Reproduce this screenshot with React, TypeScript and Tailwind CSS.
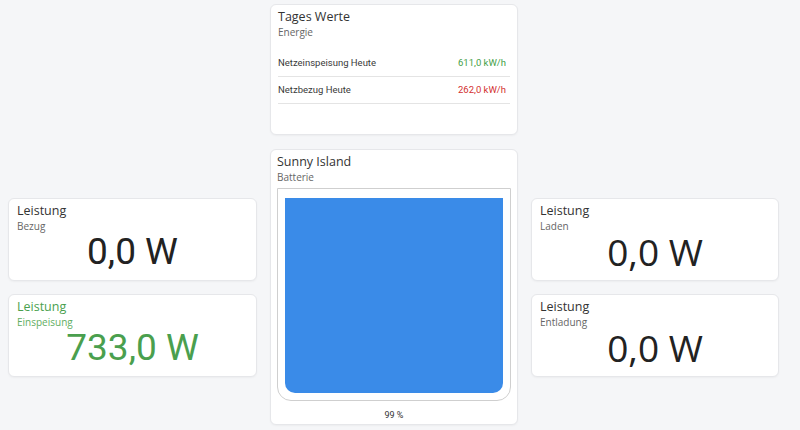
import type { ReactNode } from "react"

const title = "font-['Open_Sans',sans-serif]"
const roboto = "font-['Roboto',sans-serif]"

function Card({ className = "", children }: { className?: string; children: ReactNode }) {
  return (
    <div className={`rounded-md border border-[#e6e7ea] bg-white shadow-[0_1px_2px_rgba(0,0,0,0.04)] ${className}`}>
      {children}
    </div>
  )
}

function Header({ name, sub, green }: { name: string; sub: string; green?: boolean }) {
  return (
    <div className={title}>
      <p className={`text-[12.5px] leading-4 font-medium ${green ? "text-[#4a9f4e]" : "text-[#333]"}`}>{name}</p>
      <p className={`text-[10px] leading-[15px] ${green ? "text-[#5fae62]" : "text-[#666]"}`}>{sub}</p>
    </div>
  )
}

function ValueCard({ name, sub, value, green, font }: { name: string; sub: string; value: string; green?: boolean; font: string }) {
  return (
    <Card className="h-[83px] px-2 pt-[4px]">
      <Header name={name} sub={sub} green={green} />
      <p className={`-mt-px text-center text-[37px] leading-none ${font} ${green ? "text-[#4a9f4e]" : "text-[#222]"}`}>{value}</p>
    </Card>
  )
}

function Row({ label, value, color }: { label: string; value: string; color: string }) {
  return (
    <div className={`flex h-[27px] items-center justify-between border-b border-[#e4e4e4] pr-1 text-[9.5px] text-[#3a3a3a] ${roboto}`}>
      <span>{label}</span>
      <span className={color}>{value}</span>
    </div>
  )
}

export default function App() {
  return (
    <div className="min-h-[430px] bg-[#f5f6f8] pl-2 pt-1">
      <div className="grid grid-cols-[249px_248px_248px] gap-x-[13px] gap-y-[14px]">
        <div />
        <Card className="h-[131px] px-[7px] pt-[4px]">
          <Header name="Tages Werte" sub="Energie" />
          <div className="mt-[10px]">
            <Row label="Netzeinspeisung Heute" value="611,0 kW/h" color="text-[#43a047]" />
            <Row label="Netzbezug Heute" value="262,0 kW/h" color="text-[#d32f2f]" />
          </div>
        </Card>
        <div />

        <div className="flex flex-col gap-[13px] self-center">
          <ValueCard name="Leistung" sub="Bezug" value="0,0 W" font={roboto} />
          <ValueCard name="Leistung" sub="Einspeisung" value="733,0 W" green font={roboto} />
        </div>

        <Card className="flex h-[276px] flex-col px-[6px] pt-[4px]">
          <Header name="Sunny Island" sub="Batterie" />
          <div className="mt-[3px] h-[213px] rounded-b-[14px] border border-[#cfcfcf] px-[7px] pt-[9px] pb-[7px]">
            <div className="h-full rounded-b-[10px] bg-[#3a8be8]" />
          </div>
          <p className={`mt-[8px] text-center text-[9px] text-[#333] ${roboto}`}>99 %</p>
        </Card>

        <div className="flex flex-col gap-[13px] self-center">
          <ValueCard name="Leistung" sub="Laden" value="0,0 W" font={title} />
          <ValueCard name="Leistung" sub="Entladung" value="0,0 W" font={title} />
        </div>
      </div>
    </div>
  )
}
